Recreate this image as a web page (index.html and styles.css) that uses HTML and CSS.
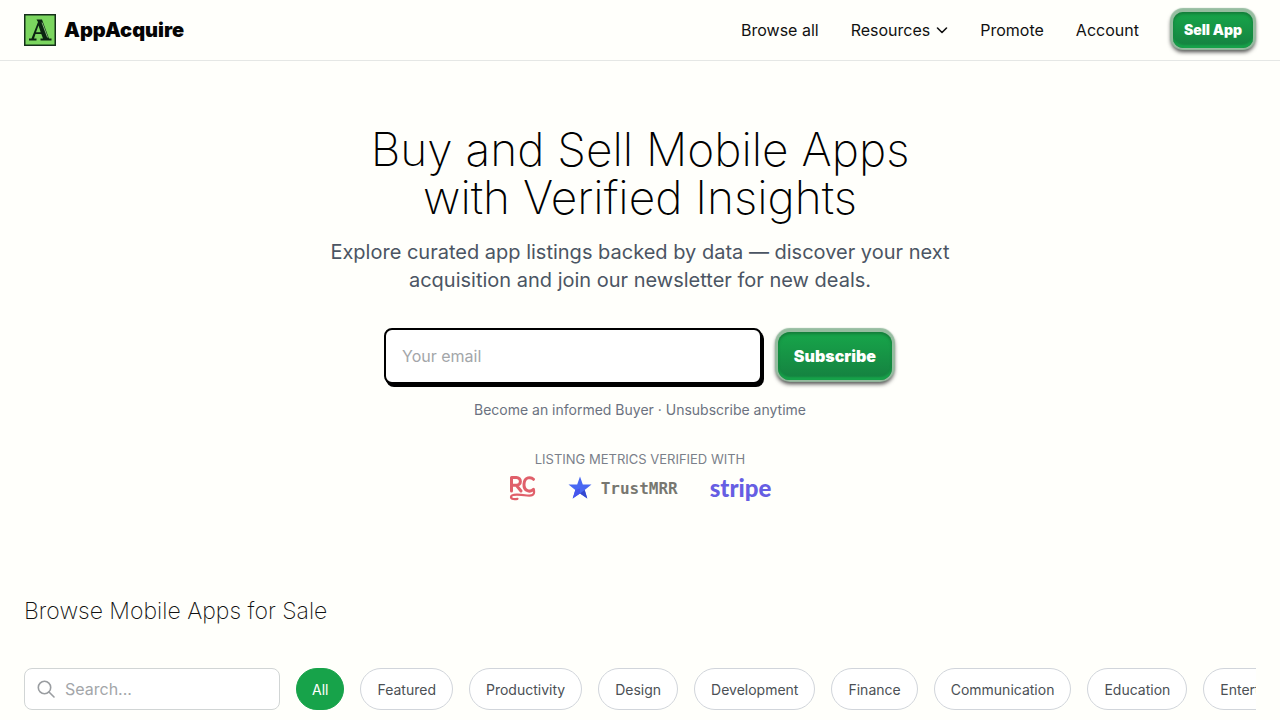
FILE: index.html
```html
<!DOCTYPE html>
<html lang="en">
<head>
  <meta charset="UTF-8" />
  <meta name="viewport" content="width=device-width, initial-scale=1.0" />
  <title>AppAcquire - Buy and Sell Mobile Apps</title>
  <link rel="stylesheet" href="styles.css">
</head>
<body>
  <header class="header">
    <a class="brand" href="#">
      <svg class="brand-logo" viewBox="0 0 32 32" aria-hidden="true">
        <rect x="0.75" y="0.75" width="30.5" height="30.5" fill="#7bd65f" stroke="#14301a" stroke-width="1.5"/>
        <path d="M12.500 5.500H18L25 24.500H27.500V26.500H16.500V24.500H19L17.300 20H11.500L10 24.500H12.500V26.500H5V24.500H7.500L14 8zM14.500 11.500 12 18.200H16.700z" fill="#0c2412" fill-rule="evenodd"/>
        <path d="M18 8.500 23.600 23.500" stroke="#a5d996" stroke-width="0.8" fill="none"/>
      </svg>
      <span>AppAcquire</span>
    </a>
    <nav class="nav">
      <a href="#">Browse all</a>
      <button class="nav-menu" type="button">Resources
        <svg width="12" height="12" viewBox="0 0 12 12" fill="none" stroke="currentColor" stroke-width="1.6" stroke-linecap="round" stroke-linejoin="round" aria-hidden="true"><path d="M1.500 4 6 8.500 10.500 4"/></svg>
      </button>
      <a href="#">Promote</a>
      <a href="#">Account</a>
      <button class="btn btn-small" type="button">Sell App</button>
    </nav>
  </header>

  <main>
    <section class="hero">
      <h1>Buy and Sell Mobile Apps<br>with Verified Insights</h1>
      <p class="lead">Explore curated app listings backed by data — discover your next acquisition and join our newsletter for new deals.</p>
      <form class="subscribe">
        <input type="email" placeholder="Your email" aria-label="Your email">
        <button class="btn" type="button">Subscribe</button>
      </form>
      <p class="note">Become an informed Buyer · Unsubscribe anytime</p>
      <p class="verified">Listing metrics verified with</p>
      <div class="partners">
        <svg class="rc" width="27" height="26" viewBox="0 0 27 26" fill="none" stroke="#e0606a" stroke-linecap="round" stroke-linejoin="round" role="img" aria-label="RevenueCat">
          <path d="M2.500 16V2.500H7.500a3.800 3.800 0 0 1 0 7.800H3M7.500 10.500 12 16" stroke-width="3"/>
          <path d="M24.500 4.300C22 1.800 15.500 1.500 15 9s6.500 8.500 9.500 5.300" stroke-width="3"/>
          <path d="M25 15.500c.8 5-2.500 5.500-7 5-6-.8-16-2-16 1.500 0 2.500 4 2.300 6.500 1.800" stroke-width="2.200"/>
        </svg>
        <span class="trust">
          <svg width="24" height="24" viewBox="0 0 24 24" aria-hidden="true">
            <path d="M12 0.500 14.800 8.500H23.500L16.700 14 19.300 22.500 12 17.500 4.700 22.500 7.300 14 0.500 8.500H9.200z" fill="#4968f2"/>
            <path d="M16.700 14 19.300 22.500 12 17.500z" fill="#3448cf"/>
            <path d="M12 12.500 12 17.500 4.700 22.500 7.300 14z" fill="#4656ed"/>
          </svg>
          TrustMRR
        </span>
        <span class="stripe">stripe</span>
      </div>
    </section>

    <section class="browse">
      <h2>Browse Mobile Apps for Sale</h2>
      <div class="filters">
        <label class="search">
          <svg width="20" height="20" viewBox="0 0 20 20" fill="none" stroke="#9a9da1" stroke-width="1.600" stroke-linecap="round" aria-hidden="true"><circle cx="8.500" cy="8.500" r="6.200"/><path d="M13 13l5 5"/></svg>
          <input type="text" placeholder="Search..." aria-label="Search">
        </label>
        <div class="chips">
          <button class="chip active" type="button">All</button>
          <button class="chip" type="button">Featured</button>
          <button class="chip" type="button">Productivity</button>
          <button class="chip" type="button">Design</button>
          <button class="chip" type="button">Development</button>
          <button class="chip" type="button">Finance</button>
          <button class="chip" type="button">Communication</button>
          <button class="chip" type="button">Education</button>
          <button class="chip" type="button">Entertainment</button>
        </div>
      </div>
    </section>
  </main>
</body>
</html>
```
FILE: styles.css
```css
* {
  box-sizing: border-box;
}
body {
  margin: 0;
  font-family: Inter, "Liberation Sans", sans-serif;
  background: #fffffb;
  color: #111;
  overflow: hidden;
}
h1, h2, p {
  margin: 0;
}
a {
  color: inherit;
  text-decoration: none;
}
button, input {
  font: inherit;
  color: inherit;
}
button {
  cursor: pointer;
}
.header {
  display: flex;
  align-items: center;
  justify-content: space-between;
  height: 61px;
  padding: 0 24px 1px;
  border-bottom: 1px solid #e5e7e5;
}
.brand {
  display: flex;
  align-items: center;
  gap: 8px;
  font-size: 20px;
  font-weight: 900;
  color: #050505;
}
.brand-logo {
  width: 32px;
  height: 32px;
}
.nav {
  display: flex;
  align-items: center;
  gap: 32px;
  font-size: 16px;
}
.nav-menu {
  display: flex;
  align-items: center;
  gap: 6px;
  padding: 0;
  border: none;
  background: none;
}
.btn {
  height: 48px;
  margin: 0 4px;
  padding: 0 16px;
  border: none;
  border-radius: 12px;
  background: linear-gradient(#17a64a, #158040);
  box-shadow: 0 -1px 1px 3px #96bda0, 0 2px 4px 2px #444, inset 0 2px 3px #147a39, inset 0 -3px 2px #17a34a;
  color: #fff;
  font-size: 16px;
  font-weight: 900;
}
.btn-small {
  height: 36px;
  margin: 0 3px 0 2px;
  padding: 0 11px;
  border-radius: 10px;
  font-size: 14px;
}
.hero {
  display: flex;
  flex-direction: column;
  align-items: center;
  padding: 64px 24px 94px;
  text-align: center;
}
h1 {
  font-size: 46px;
  line-height: 48px;
  font-weight: 200;
  color: #000;
}
.lead {
  max-width: 640px;
  margin-top: 17px;
  font-size: 20px;
  line-height: 28px;
  color: #4b5563;
}
.subscribe {
  display: flex;
  align-items: center;
  gap: 12px;
  width: 100%;
  max-width: 512px;
  margin-top: 34px;
}
.subscribe input {
  flex: 1;
  min-width: 0;
  height: 56px;
  padding: 0 16px;
  border: 2px solid #000;
  border-radius: 8px;
  background: #fff;
  box-shadow: 2px 3px 0 #000;
}
input::placeholder {
  color: #a3a6a9;
  opacity: 1;
}
.note {
  margin-top: 16px;
  font-size: 14px;
  line-height: 20px;
  color: #6b7280;
}
.verified {
  margin-top: 31px;
  font-size: 13px;
  line-height: 16px;
  text-transform: uppercase;
  color: #7a808a;
}
.partners {
  display: flex;
  align-items: center;
  gap: 32px;
  height: 26px;
  margin-top: 8px;
}
.trust {
  display: flex;
  align-items: center;
  gap: 9px;
  font-family: "DejaVu Sans Mono", monospace;
  font-size: 16px;
  font-weight: 700;
  color: #777770;
}
.stripe {
  font-family: Lato, sans-serif;
  font-size: 24px;
  line-height: 24px;
  font-weight: 900;
  color: #665ee3;
}
.browse {
  padding: 0 24px 10px;
}
h2 {
  font-size: 23px;
  line-height: 32px;
  font-weight: 200;
  color: #111;
}
.filters {
  display: flex;
  gap: 16px;
  margin-top: 41px;
}
.search {
  display: flex;
  flex: none;
  align-items: center;
  gap: 9px;
  width: 256px;
  height: 42px;
  padding: 0 11px;
  border: 1px solid #d1d5d5;
  border-radius: 8px;
  background: #fff;
}
.search svg {
  flex: none;
}
.search input {
  width: 100%;
  min-width: 0;
  padding: 0;
  border: none;
  outline: none;
  background: none;
}
.chips {
  display: flex;
  gap: 16px;
  min-width: 0;
  overflow: hidden;
}
.chip {
  flex: none;
  height: 42px;
  padding: 0 16px;
  border: 1px solid #d1d5db;
  border-radius: 21px;
  background: #fff;
  font-size: 14px;
  color: #4b5055;
}
.chip.active {
  padding: 0 15px;
  border-color: #17a34a;
  background: #17a34a;
  color: #fff;
}
```
